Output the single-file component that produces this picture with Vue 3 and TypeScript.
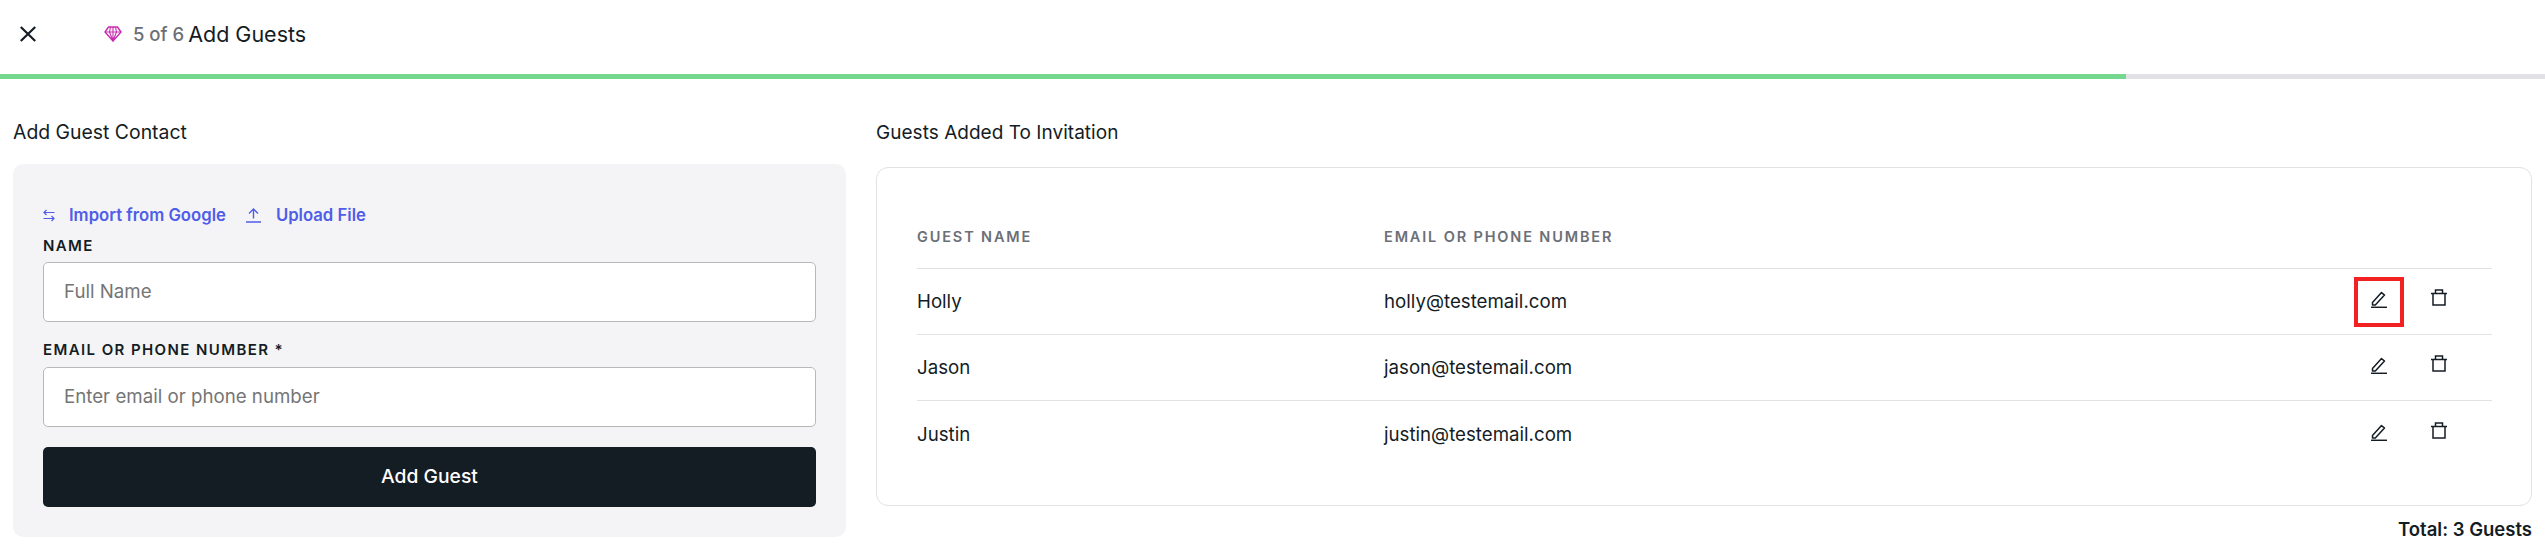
<script setup lang="ts">
interface Guest { name: string; email: string; active?: boolean }
const guests: Guest[] = [
  { name: 'Holly', email: 'holly@testemail.com', active: true },
  { name: 'Jason', email: 'jason@testemail.com' },
  { name: 'Justin', email: 'justin@testemail.com' },
]
</script>

<template>
  <div class="page">
    <header class="top">
      <svg class="close" width="16" height="16" viewBox="0 0 16 16" fill="none" stroke="#141c24" stroke-width="2.2">
        <path d="M.8 1l14.400 14M15.200 1L.8 15" />
      </svg>
      <svg class="gem" width="18" height="16" viewBox="0 0 18 16" fill="none" stroke="#c92bb0" stroke-width="1.4" stroke-linejoin="round">
        <path d="M4.500 1h9L17 6l-8 9L1 6z" />
        <path d="M1 6h16M6.500 1L5.500 6 9 15l3.500-9-1-5M9 1v14" stroke-width="1.100" />
      </svg>
      <span class="step">5 of 6</span>
      <span class="step-title">Add Guests</span>
    </header>
    <div class="progress"><div class="progress-fill"></div></div>

    <main class="main">
      <section class="left">
        <h2 class="title title-left">Add Guest Contact</h2>
        <div class="panel">
          <div class="links">
            <a class="link">
              <svg width="12" height="13" viewBox="0 0 12 13" fill="none" stroke="#4f5de8" stroke-width="1.200">
                <path d="M11.500 3.500H1M3.500 1L1 3.500 3.500 6M.5 9.500H11M8.500 7L11 9.500 8.500 12" />
              </svg>
              <span class="link-text first">Import from Google</span>
            </a>
            <a class="link">
              <svg width="15" height="15" viewBox="0 0 15 15" fill="none" stroke="#4f5de8" stroke-width="1.400">
                <path d="M7.500 10.500V1.200M3 5.500l4.500-4.500L12 5.500M0 14h15" />
              </svg>
              <span class="link-text second">Upload File</span>
            </a>
          </div>
          <label class="label">NAME</label>
          <input class="input" type="text" placeholder="Full Name" />
          <label class="label second-label">EMAIL OR PHONE NUMBER *</label>
          <input class="input" type="text" placeholder="Enter email or phone number" />
          <button class="submit" type="button">Add Guest</button>
        </div>
      </section>

      <section class="right">
        <h2 class="title title-right">Guests Added To Invitation</h2>
        <div class="card">
          <div class="row head">
            <span class="col-name">GUEST NAME</span>
            <span class="col-email">EMAIL OR PHONE NUMBER</span>
          </div>
          <div v-for="g in guests" :key="g.email" class="row">
            <span class="col-name">{{ g.name }}</span>
            <span class="col-email">{{ g.email }}</span>
            <div class="actions">
              <button class="icon-btn" :class="{ active: g.active }" type="button" aria-label="Edit">
                <svg width="16" height="17" viewBox="0 0 16 17" fill="none" stroke="#141c24" stroke-width="1.500" stroke-linejoin="round">
                  <path d="M1.500 11.500L10.500 1.500l3 2.600-9.200 10H1.500z" />
                  <path d="M0 16.300h16" />
                </svg>
              </button>
              <button class="icon-btn" type="button" aria-label="Delete">
                <svg class="trash" width="16" height="17" viewBox="0 0 16 17" fill="none" stroke="#141c24" stroke-width="1.500">
                  <path d="M2 4.500h12V16H2zM0 4.500h16M4.500 4.500V1h7v3.500" />
                </svg>
              </button>
            </div>
          </div>
        </div>
        <div class="total">Total: 3 Guests</div>
      </section>
    </main>
  </div>
</template>

<style>
html, body { margin: 0; background: #fff; }
</style>

<style scoped>
.page {
  width: 2545px;
  height: 546px;
  overflow: hidden;
  font-family: Inter, "Liberation Sans", sans-serif;
  color: #141c24;
}
.top {
  height: 74px;
  box-sizing: border-box;
  padding: 0 0 7px 20px;
  display: flex;
  align-items: center;
}
.gem { margin-left: 68px; }
.step { margin-left: 11px; font-size: 18.500px; font-weight: 500; color: #6b6f76; }
.step-title { margin-left: 4px; font-size: 21.500px; }
.progress { height: 5px; background: #e2e2e6; }
.progress-fill { width: 2126px; height: 5px; background: #74d98f; }
.main {
  display: grid;
  grid-template-columns: 833px 1656px;
  column-gap: 30px;
  padding: 40px 0 0 13px;
}
.title {
  margin: 0 0 19px;
  font-size: 19px;
  line-height: 26px;
  font-weight: 400;
}
.title-left { font-size: 19.400px; }
.title-right { margin-bottom: 21px; padding-top: 1px; letter-spacing: 0.03px; }
.panel {
  background: #f4f4f6;
  border-radius: 10px;
  padding: 39px 30px 30px;
}
.links { display: flex; height: 24px; align-items: center; }
.link { display: flex; align-items: center; color: #4f5de8; font-size: 16.700px; font-weight: 600; }
.link-text.first { margin-left: 14px; margin-right: 20px; }
.link-text.second { margin-left: 15px; }
.label {
  display: block;
  margin-top: 9px;
  height: 20px;
  line-height: 20px;
  font-size: 15px;
  font-weight: 600;
  letter-spacing: 1.400px;
  margin-bottom: 6px;
}
.second-label { margin-top: 18px; margin-bottom: 7px; }
.input {
  display: block;
  width: 100%;
  height: 60px;
  box-sizing: border-box;
  border: 1px solid #b8b8b8;
  border-radius: 5px;
  padding: 0 20px 2px;
  background: #fff;
  font: 18.700px Inter, "Liberation Sans", sans-serif;
  outline: none;
}
.input::placeholder { color: #757575; opacity: 1; }
.submit {
  display: block;
  width: 100%;
  height: 60px;
  margin-top: 20px;
  padding: 0 0 2px;
  border: 0;
  border-radius: 5px;
  background: #141c24;
  color: #fff;
  font: 500 19.300px Inter, "Liberation Sans", sans-serif;
}
.card {
  box-sizing: border-box;
  height: 339px;
  border: 1px solid #e2e2e4;
  border-radius: 12px;
  padding: 40px 39px 0 40px;
}
.row {
  display: flex;
  align-items: center;
  height: 66px;
  box-sizing: border-box;
  border-bottom: 1px solid #e2e2e4;
  font-size: 18.700px;
}
.row:last-child { border-bottom: 0; }
.head {
  height: 61px;
  padding-bottom: 3px;
  font-size: 14.500px;
  font-weight: 600;
  letter-spacing: 1.850px;
  color: #6b6f76;
}
.col-name { width: 467px; }
.actions {
  margin-left: auto;
  display: flex;
  gap: 10px;
  padding-right: 28px;
}
.icon-btn {
  width: 50px;
  height: 50px;
  box-sizing: border-box;
  border: 4px solid transparent;
  background: none;
  padding: 0;
  display: flex;
  align-items: center;
  justify-content: center;
}
.icon-btn svg { display: block; margin-top: -4px; }
.icon-btn .trash { margin-top: -8px; }
.icon-btn.active { border-color: #f22222; }
.total {
  margin-top: 11px;
  text-align: right;
  font-size: 18.500px;
  line-height: 24px;
  font-weight: 600;
}
</style>
